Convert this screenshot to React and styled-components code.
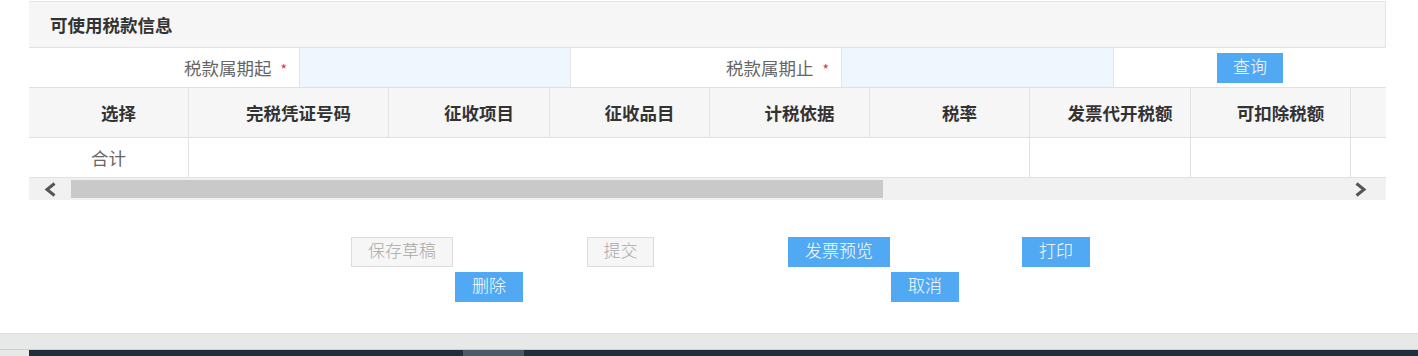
import React from "react";
import styled, { createGlobalStyle } from "styled-components";

const Global = createGlobalStyle`
  html, body { margin: 0; padding: 0; background: #fff; }
  body { font-family: "Noto Sans CJK SC", "Noto Sans", sans-serif; overflow: hidden; }
  * { box-sizing: border-box; }
`;

const Page = styled.div`
  width: 1418px;
  height: 356px;
  display: flex;
  flex-direction: column;
  overflow: hidden;
`;

const Panel = styled.div`
  margin: 1px 0 0 29px;
  width: 1357px;
  border-top: 1px solid #e5e5e5;
`;

const Title = styled.div`
  height: 46px;
  display: flex;
  align-items: center;
  padding-left: 21px;
  background: #f6f6f6;
  border-right: 1px solid #e5e5e5;
  border-bottom: 1px solid #e2e2e2;
  font-size: 17.5px;
  font-weight: 700;
  color: #333;
`;

const QueryRow = styled.div`
  display: grid;
  grid-template-columns: 271px 271px 271px 272px 272px;
  height: 40px;
  border-right: 1px solid #e5e5e5;
  border-bottom: 1px solid #e0e0e0;
`;

const LabelCell = styled.div`
  display: flex;
  align-items: center;
  justify-content: flex-end;
  padding-right: 12px;
  font-size: 17.5px;
  color: #666;
  background: #fff;
  border-right: 1px solid #e5e5e5;
`;

const Star = styled.span`
  color: #e0304a;
  font-size: 14px;
  margin-left: 9px;
  position: relative;
  top: 1px;
`;

const InputCell = styled.div`
  background: #eff6fe;
  border-right: 1px solid #e5e5e5;
`;

const ButtonCell = styled.div`
  display: flex;
  align-items: center;
  justify-content: center;
  background: #fff;
`;

const Btn = styled.button`
  height: 30px;
  padding: 0;
  margin-left: ${(p) => p.$ml || 0}px;
  width: ${(p) => p.$w}px;
  font-family: "Liberation Serif", "Noto Sans CJK SC", serif;
  font-size: 17px;
  line-height: 28px;
  border: 1px solid ${(p) => (p.$disabled ? "#dcdcdc" : "#52a9f3")};
  background: ${(p) => (p.$disabled ? "#f6f6f6" : "#52a9f3")};
  color: ${(p) => (p.$disabled ? "#a8a8a8" : "#fff")};
  font-weight: 300;
  cursor: pointer;
`;

const Table = styled.div`
  display: grid;
  grid-template-columns: 160px 200px 161px 160px 160px 160px 161px 160px 35px;
`;

const HeadCell = styled.div`
  height: 50px;
  display: flex;
  align-items: center;
  justify-content: center;
  padding-left: 20px;
  background: #f6f6f6;
  border-right: ${(p) => (p.$last ? "none" : "1px solid #e2e2e2")};
  border-bottom: 1px solid #e0e0e0;
  font-size: 17.5px;
  font-weight: 700;
  color: #333;
  white-space: nowrap;
`;

const BodyCell = styled.div`
  height: 40px;
  display: flex;
  align-items: center;
  justify-content: center;
  grid-column: span ${(p) => p.$span || 1};
  border-right: ${(p) => (p.$last ? "none" : "1px solid #e2e2e2")};
  border-bottom: 1px solid #e2e2e2;
  font-size: 17.5px;
  color: #666;
  background: #fff;
`;

const ScrollBar = styled.div`
  height: 22px;
  display: flex;
  align-items: center;
  background: #f1f1f1;
`;

const Arrow = styled.div`
  width: 42px;
  height: 22px;
  display: flex;
  align-items: center;
  justify-content: center;
  padding-right: ${(p) => (p.$right ? "9px" : "0")};
`;

const Thumb = styled.div`
  width: 812px;
  height: 18px;
  background: #c9c9c9;
`;

const Track = styled.div`
  flex: 1;
`;

const Actions = styled.div`
  margin-top: 37px;
  display: flex;
  flex-direction: column;
  gap: 5px;
  width: 1418px;
`;

const ActionRow = styled.div`
  display: flex;
  padding-left: ${(p) => p.$left}px;
`;

const Footer = styled.div`
  margin-top: 31px;
  height: 17px;
  background: #e7e8e8;
  border-top: 1px solid #dedfdf;
  border-bottom: 1px solid #c9cdd1;
`;

const Taskbar = styled.div`
  display: flex;
  height: 6px;
  background: #e7e8e8;
`;

const TaskLeft = styled.div`
  width: 29px;
`;

const TaskBody = styled.div`
  flex: 1;
  display: flex;
  background: #1f2e3d;
  padding-left: 434px;
`;

const TaskItem = styled.div`
  width: 61px;
  background: #4b5866;
`;

const Chevron = ({ right }) => (
  <svg width="13" height="15" viewBox="0 0 13 15">
    <polyline
      points={right ? "2.5,1.5 10,7.5 2.5,13.5" : "10.5,1.5 3,7.5 10.5,13.5"}
      fill="none"
      stroke="#555"
      strokeWidth="3"
      strokeLinejoin="miter"
    />
  </svg>
);

const heads = ["选择", "完税凭证号码", "征收项目", "征收品目", "计税依据", "税率", "发票代开税额", "可扣除税额", ""];

export default function App() {
  return (
    <Page>
      <Global />
      <Panel>
        <Title>可使用税款信息</Title>
        <QueryRow>
          <LabelCell>
            税款属期起<Star>*</Star>
          </LabelCell>
          <InputCell />
          <LabelCell>
            税款属期止<Star>*</Star>
          </LabelCell>
          <InputCell />
          <ButtonCell>
            <Btn $w={66}>查询</Btn>
          </ButtonCell>
        </QueryRow>
        <Table>
          {heads.map((h, i) => (
            <HeadCell key={i} $last={i === heads.length - 1}>
              {h}
            </HeadCell>
          ))}
          <BodyCell>合计</BodyCell>
          <BodyCell $span={5} />
          <BodyCell />
          <BodyCell />
          <BodyCell $last />
        </Table>
        <ScrollBar>
          <Arrow>
            <Chevron />
          </Arrow>
          <Thumb />
          <Track />
          <Arrow $right>
            <Chevron right />
          </Arrow>
        </ScrollBar>
      </Panel>
      <Actions>
        <ActionRow $left={351}>
          <Btn $w={102} $disabled>保存草稿</Btn>
          <Btn $w={67} $ml={134} $disabled>提交</Btn>
          <Btn $w={102} $ml={134}>发票预览</Btn>
          <Btn $w={68} $ml={132}>打印</Btn>
        </ActionRow>
        <ActionRow $left={455}>
          <Btn $w={68}>删除</Btn>
          <Btn $w={68} $ml={368}>取消</Btn>
        </ActionRow>
      </Actions>
      <Footer />
      <Taskbar>
        <TaskLeft />
        <TaskBody>
          <TaskItem />
        </TaskBody>
      </Taskbar>
    </Page>
  );
}
